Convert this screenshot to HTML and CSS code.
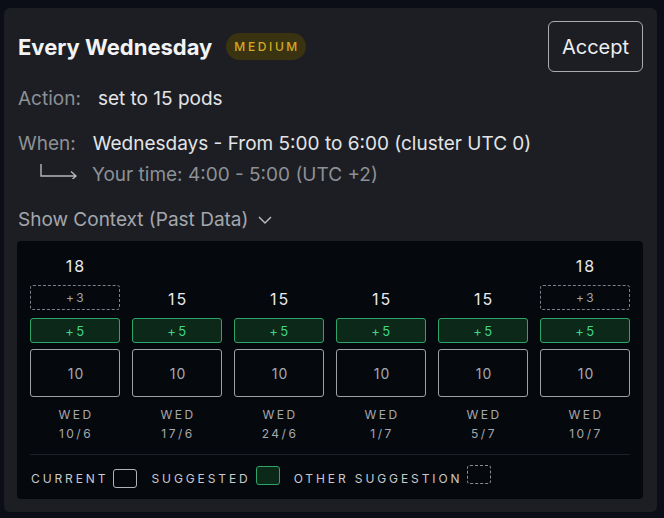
FILE: index.html
```html
<!DOCTYPE html>
<html lang="en">
<head>
  <meta charset="UTF-8" />
  <title>Scaling Suggestion</title>
  <link rel="stylesheet" href="styles.css">
</head>
<body>
  <div class="card">
    <div class="header">
      <div class="title-wrap">
        <h1 class="title">Every Wednesday</h1>
        <span class="badge">MEDIUM</span>
      </div>
      <button class="accept">Accept</button>
    </div>

    <div class="row action">
      <span class="label">Action:</span>
      <span class="value">set to 15 pods</span>
    </div>

    <div class="row when">
      <span class="label">When:</span>
      <span class="value">Wednesdays - From 5:00 to 6:00 (cluster UTC 0)</span>
    </div>
    <div class="row local">
      <svg class="turn" width="40" height="16" viewBox="0 0 40 16">
        <path d="M2 1 V13 H37 M32 8.5 L37 13 L32 17.5" fill="none" stroke="#b4b7bc" stroke-width="1.4"/>
      </svg>
      <span class="muted">Your time: 4:00 - 5:00 (UTC +2)</span>
    </div>

    <div class="toggle">
      Show Context (Past Data)
      <svg width="16" height="10" viewBox="0 0 16 10">
        <path d="M2 2 L8 8 L14 2" fill="none" stroke="#b4b7bc" stroke-width="1.5"/>
      </svg>
    </div>

    <div class="panel">
      <div class="chart">
        <div class="col">
          <div class="total">18</div>
          <div class="box other">+3</div>
          <div class="box suggested">+5</div>
          <div class="box current">10</div>
          <div class="date">WED<br>10/6</div>
        </div>
        <div class="col">
          <div class="total">15</div>
          <div class="box suggested">+5</div>
          <div class="box current">10</div>
          <div class="date">WED<br>17/6</div>
        </div>
        <div class="col">
          <div class="total">15</div>
          <div class="box suggested">+5</div>
          <div class="box current">10</div>
          <div class="date">WED<br>24/6</div>
        </div>
        <div class="col">
          <div class="total">15</div>
          <div class="box suggested">+5</div>
          <div class="box current">10</div>
          <div class="date">WED<br>1/7</div>
        </div>
        <div class="col">
          <div class="total">15</div>
          <div class="box suggested">+5</div>
          <div class="box current">10</div>
          <div class="date">WED<br>5/7</div>
        </div>
        <div class="col">
          <div class="total">18</div>
          <div class="box other">+3</div>
          <div class="box suggested">+5</div>
          <div class="box current">10</div>
          <div class="date">WED<br>10/7</div>
        </div>
      </div>

      <div class="legend">
        <span>CURRENT</span><i class="swatch current"></i>
        <span>SUGGESTED</span><i class="swatch suggested"></i>
        <span>OTHER SUGGESTION</span><i class="swatch other"></i>
      </div>
    </div>
  </div>
</body>
</html>
```

FILE: styles.css
```css
/* Page */
body {
  margin: 0;
  background: #0b0e16;
  font-family: Inter, "Noto Sans", sans-serif;
  color: #e6e7e9;
}
.card {
  margin: 8px 7px 0 4px;
  height: 504px;
  box-sizing: border-box;
  padding: 13px 14px 13px 13px;
  background: #1c1e23;
  border-radius: 6px;
}
/* Header */
.header {
  display: flex;
  justify-content: space-between;
  align-items: center;
  padding-left: 1px;
}
.title-wrap {
  display: flex;
  align-items: center;
  gap: 14px;
}
.title {
  margin: 0;
  font-size: 22px;
  font-weight: 700;
  color: #f2f3f4;
}
.badge {
  background: #3a3312;
  color: #d4a924;
  font-size: 12px;
  font-weight: 500;
  letter-spacing: 2.6px;
  line-height: 27px;
  padding: 0 6px 0 8px;
  border-radius: 14px;
}
.accept {
  width: 95px;
  height: 51px;
  background: transparent;
  color: #eceef0;
  border: 1.5px solid #a9acb1;
  border-radius: 6px;
  font-family: inherit;
  font-size: 20px;
}
/* Detail rows */
.row {
  display: flex;
  align-items: center;
  font-size: 19px;
  line-height: 24px;
  padding-left: 1px;
}
.label {
  color: #8d9096;
}
.action {
  margin-top: 15px;
  gap: 17px;
}
.when {
  margin-top: 21px;
  gap: 17px;
}
.when .value, .action .value {
  color: #e3e4e6;
}
.local {
  margin-top: 7px;
  padding-left: 22px;
}
.turn {
  margin-right: 13px;
  margin-top: -8px;
}
.muted {
  color: #8d9096;
}
.toggle {
  margin-top: 21px;
  font-size: 19px;
  line-height: 24px;
  color: #a4a7ad;
  display: flex;
  align-items: center;
  gap: 9px;
  padding-left: 1px;
}
/* Chart panel */
.panel {
  margin-top: 9px;
  background: #05080d;
  border-radius: 4px;
  padding: 16px 13px 0 13px;
  height: 258px;
  box-sizing: border-box;
}
.chart {
  display: grid;
  grid-template-columns: repeat(6, 1fr);
  column-gap: 12px;
  align-items: end;
  padding-bottom: 11px;
  border-bottom: 1px solid #1d2027;
}
.col {
  display: flex;
  flex-direction: column;
  align-items: stretch;
}
.total {
  text-align: center;
  font-size: 16px;
  letter-spacing: 2px;
  padding-left: 2px;
  line-height: 18px;
  margin-bottom: 10px;
  color: #e8e9eb;
}
.box {
  box-sizing: border-box;
  display: flex;
  align-items: center;
  justify-content: center;
  border-radius: 3px;
  letter-spacing: 2.5px;
  padding-left: 2px;
}
.other {
  height: 25px;
  border: 1.5px dashed #7d8086;
  color: #a2a5aa;
  font-size: 12px;
  margin-bottom: 8px;
}
.suggested {
  height: 25px;
  border: 1.5px solid #2ea568;
  background: #0b2818;
  color: #42d486;
  font-size: 13px;
  margin-bottom: 6px;
}
.current {
  height: 48px;
  border: 1.5px solid #9ea1a6;
  color: #a6a9ae;
  font-size: 14px;
  letter-spacing: 1px;
}
.date {
  margin-top: 8px;
  text-align: center;
  font-size: 12px;
  line-height: 19px;
  letter-spacing: 2.5px;
  padding-left: 2px;
  color: #a5a8ad;
}
/* Legend */
.legend {
  display: flex;
  align-items: center;
  height: 46px;
  font-size: 12px;
  letter-spacing: 2.9px;
  color: #c8cacd;
  padding-left: 1px;
}
.legend span {
  margin-right: 5px;
}
.swatch {
  width: 24px;
  height: 19px;
  box-sizing: border-box;
  border-radius: 3px;
  margin-right: 14px;
}
.swatch.current {
  border: 1.5px solid #b0b3b8;
}
.swatch.suggested {
  border: 1.5px solid #2ea568;
  background: #0b2818;
}
.swatch.other {
  border: 1.5px dashed #8a8d92;
}
```
